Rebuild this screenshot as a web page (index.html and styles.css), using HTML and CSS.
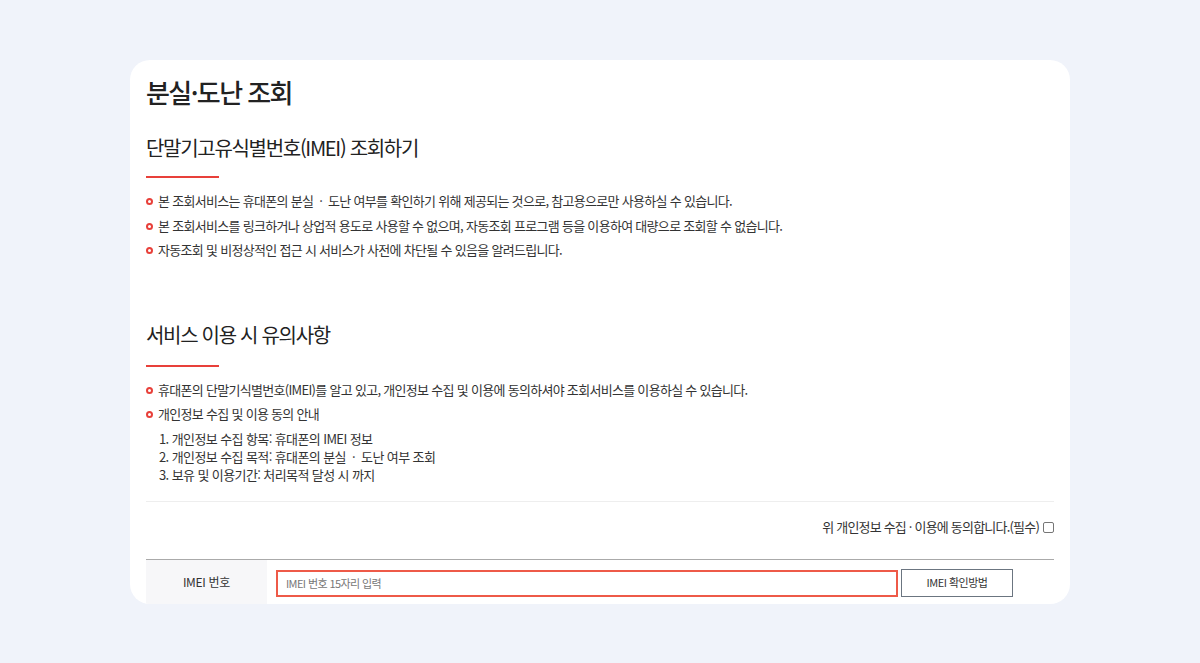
FILE: index.html
```html
<!DOCTYPE html>
<html lang="ko">
<head>
<meta charset="utf-8">
<title>분실·도난 조회</title>
<link rel="stylesheet" href="styles.css">
</head>
<body>
<div class="card">
  <h1 class="title">분실·도난 조회</h1>

  <section class="sec">
    <h2 class="sec-title">단말기고유식별번호(IMEI) 조회하기</h2>
    <ul class="dots">
      <li>본 조회서비스는 휴대폰의 분실 <span class="sep">·</span> 도난 여부를 확인하기 위해 제공되는 것으로, 참고용으로만 사용하실 수 있습니다.</li>
      <li>본 조회서비스를 링크하거나 상업적 용도로 사용할 수 없으며, 자동조회 프로그램 등을 이용하여 대량으로 조회할 수 없습니다.</li>
      <li>자동조회 및 비정상적인 접근 시 서비스가 사전에 차단될 수 있음을 알려드립니다.</li>
    </ul>
  </section>

  <section class="sec sec2">
    <h2 class="sec-title">서비스 이용 시 유의사항</h2>
    <ul class="dots">
      <li>휴대폰의 단말기식별번호(IMEI)를 알고 있고, 개인정보 수집 및 이용에 동의하셔야 조회서비스를 이용하실 수 있습니다.</li>
      <li>개인정보 수집 및 이용 동의 안내</li>
    </ul>
    <ol class="nums">
      <li>1. 개인정보 수집 항목: 휴대폰의 IMEI 정보</li>
      <li>2. 개인정보 수집 목적: 휴대폰의 분실 <span class="sep">·</span> 도난 여부 조회</li>
      <li>3. 보유 및 이용기간: 처리목적 달성 시 까지</li>
    </ol>
  </section>

  <div class="agree">
    <label class="agree-label">위 개인정보 수집 · 이용에 동의합니다.(필수) <span class="chk"></span></label>
  </div>

  <div class="form-row">
    <div class="th">IMEI 번호</div>
    <div class="td">
      <div class="input">IMEI 번호 15자리 입력</div>
      <div class="btn">IMEI 확인방법</div>
    </div>
  </div>
</div>
</body>
</html>
```

FILE: styles.css
```css
*, *::before, *::after { box-sizing: border-box; }
html, body { margin: 0; padding: 0; }
body {
  background: #f0f3fa;
  font-family: "Noto Sans CJK KR", "Noto Sans", sans-serif;
  color: #333;
}
.card {
  width: 940px;
  height: 544px;
  margin: 60px auto 0;
  background: #fff;
  border-radius: 20px;
  overflow: hidden;
  padding: 14px 16px 0;
}
.title {
  margin: 0;
  font-size: 26px;
  line-height: 36px;
  font-weight: 500;
  color: #222;
  letter-spacing: -1.6px;
}
.sec { margin-top: 24px; }
.sec2 { margin-top: 58px; }
.sec-title {
  margin: 0;
  font-size: 20px;
  line-height: 28px;
  font-weight: 400;
  color: #222;
  letter-spacing: -1.3px;
  padding-bottom: 14px;
  position: relative;
}
.sec2 .sec-title { padding-bottom: 16px; }
.sec-title::after {
  content: "";
  display: block;
  width: 73px;
  height: 2px;
  background: #e8403a;
  position: absolute;
  left: 0;
  bottom: -2px;
}
.sep { padding: 0 3px; }
.dots {
  list-style: none;
  margin: 13px 0 0;
  padding: 0;
}
.dots li {
  font-size: 13px;
  line-height: 24.5px;
  letter-spacing: -0.7px;
  padding-left: 12px;
  position: relative;
  color: #333;
}
.dots li::before {
  content: "";
  position: absolute;
  left: 0;
  top: 9px;
  width: 7px;
  height: 7px;
  border: 2px solid #e8403a;
  border-radius: 50%;
}
.nums {
  list-style: none;
  margin: 3px 0 0;
  padding: 0 0 0 13px;
}
.nums li {
  font-size: 13px;
  line-height: 18px;
  letter-spacing: -0.6px;
}
.agree {
  margin-top: 17px;
  border-top: 1px solid #eeeeee;
  padding-top: 11px;
  text-align: right;
  height: 58px;
}
.agree-label {
  font-size: 13px;
  line-height: 20px;
  letter-spacing: -0.8px;
  display: inline-flex;
  align-items: center;
  gap: 4px;
}
.chk {
  display: inline-block;
  width: 11px;
  height: 11px;
  border: 1px solid #767676;
  border-radius: 2px;
  background: #fff;
  margin-top: 1px;
}
.form-row {
  display: flex;
  border-top: 1px solid #aaaaaa;
}
.th {
  width: 121px;
  background: #f7f7f9;
  font-size: 12px;
  letter-spacing: -0.3px;
  text-align: center;
  padding-top: 13px;
  height: 48px;
  color: #333;
}
.td {
  flex: 1;
  display: flex;
  align-items: flex-start;
  padding: 9px 0 0 9px;
  gap: 3px;
}
.input {
  width: 622px;
  height: 27px;
  border: 2px solid #ee5a48;
  font-size: 11px;
  letter-spacing: -0.6px;
  color: #777;
  padding: 0 0 0 8px;
  line-height: 23px;
  margin-top: 1px;
}
.btn {
  width: 112px;
  height: 28px;
  border: 1px solid #6b7580;
  font-size: 11px;
  letter-spacing: -0.5px;
  color: #333;
  text-align: center;
  line-height: 25px;
}
```
